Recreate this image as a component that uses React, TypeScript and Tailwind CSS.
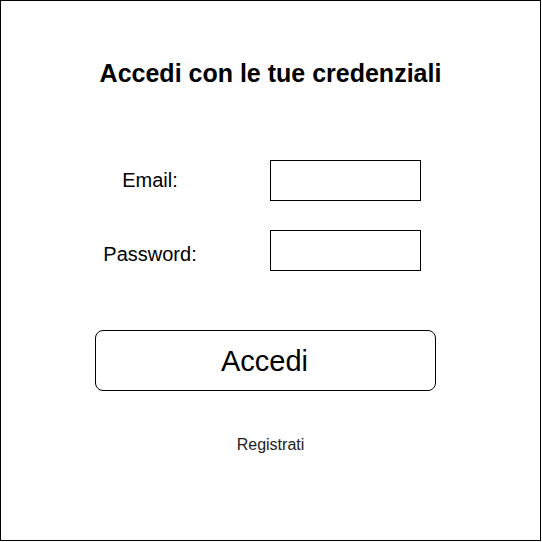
import React from "react";

const App: React.FC = () => {
  return (
    <div className="w-[541px] h-[541px] border border-black bg-white text-black flex flex-col font-['Liberation_Sans',Arial,sans-serif]">
      <h1 className="pt-[57px] text-center text-[25px] leading-[30px] font-bold">
        Accedi con le tue credenziali
      </h1>

      <div className="mt-[72px] flex items-center">
        <label className="ml-[49px] w-[200px] text-center text-[20px] leading-[24px] -mt-[1px]">
          Email:
        </label>
        <input
          type="email"
          className="ml-[20px] w-[151px] h-[41px] border border-black outline-none px-2"
        />
      </div>

      <div className="mt-[29px] flex items-center">
        <label className="ml-[49px] w-[200px] text-center text-[20px] leading-[24px] mt-[7px]">
          Password:
        </label>
        <input
          type="password"
          className="ml-[20px] w-[151px] h-[41px] border border-black outline-none px-2"
        />
      </div>

      <button className="mt-[59px] ml-[94px] w-[341px] h-[61px] rounded-[8px] border border-black text-[29px] leading-[32px] pr-[2px]">
        Accedi
      </button>

      <a className="mt-[45px] text-center text-[16px] leading-[18px] text-[#222]">
        Registrati
      </a>
    </div>
  );
};

export default App;
